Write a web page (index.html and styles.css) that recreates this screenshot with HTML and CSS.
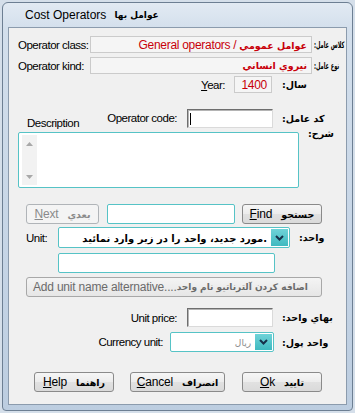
FILE: index.html
```html
<!DOCTYPE html>
<html lang="en">
<head>
    <meta charset="UTF-8">
    <meta name="viewport" content="width=device-width, initial-scale=1.0">
    <title>Cost Operators</title>
    <link rel="stylesheet" href="styles.css">
</head>
<body>
    <div class="window">
        <div class="titlebar"><span>Cost Operators</span> <b class="fa title-fa">عوامل بها</b></div>
        <div class="client">

            <div class="row r1">
                <span class="lbl cell-72">Operator class:</span>
                <div class="ro field-wide"><span>General operators / <b class="fa">عوامل عمومي</b></span></div>
                <span class="fa flbl narrow ml-2">كلاس عامل:</span>
            </div>

            <div class="row r2">
                <span class="lbl cell-72">Operator kind:</span>
                <div class="ro field-wide"><b class="fa">نيروي انساني</b></div>
                <span class="fa flbl narrow ml-2">نوع عامل:</span>
            </div>

            <div class="row r3">
                <span class="lbl cell-216 right"><u>Y</u>ear:</span>
                <div class="ro field-year"><span>1400</span></div>
                <span class="fa flbl ml-10">سال:</span>
            </div>

            <div class="row r4">
                <div class="code-left">
                    <span class="lbl desc">Description</span>
                    <span class="lbl">Operator code:</span>
                </div>
                <div class="sunken field-86 ml-10"><span class="caret"></span></div>
                <span class="fa flbl ml-9">كد عامل:</span>
            </div>

            <div class="row r-memo">
                <div class="memo">
                    <div class="memo-scroll">
                        <svg width="7" height="4" viewBox="0 0 7 4"><polygon points="0,4 3.5,0 7,4" fill="#a8a8a8"/></svg>
                        <svg width="7" height="4" viewBox="0 0 7 4"><polygon points="0,0 3.5,4 7,0" fill="#a8a8a8"/></svg>
                    </div>
                </div>
                <span class="fa flbl ml-9">شرح:</span>
            </div>

            <div class="row r5">
                <button class="btn disabled btn-next"><span><u>N</u>ext</span><b class="fa">بعدي</b></button>
                <div class="teal field-find"></div>
                <button class="btn btn-find"><span><u>F</u>ind</span><b class="fa">جستجو</b></button>
            </div>

            <div class="row r6">
                <span class="lbl unit-lbl">Unit:</span>
                <div class="teal combo combo-unit">
                    <span class="combo-text"><b class="fa">مورد جديد، واحد را در زير وارد نمائيد.</b></span>
                    <span class="drop">
                        <svg width="9" height="6" viewBox="0 0 9 6"><polyline points="1,1 4.5,4.5 8,1" fill="none" stroke="#16304a" stroke-width="2"/></svg>
                    </span>
                </div>
                <span class="fa flbl ml-9">واحد:</span>
            </div>

            <div class="row r7">
                <div class="teal field-unit2"></div>
            </div>

            <div class="row r8">
                <button class="btn soft btn-add">Add unit name alternative....<b class="fa">اضافه كردن آلترناتيو نام واحد</b></button>
            </div>

            <div class="row r9">
                <span class="lbl cell-168 right">Unit price:</span>
                <div class="sunken field-86 ml-10"></div>
                <span class="fa flbl ml-9">بهاي واحد:</span>
            </div>

            <div class="row r10">
                <span class="lbl cell-154 right">Currency unit:</span>
                <div class="teal combo combo-cur">
                    <span class="combo-text grey"><b class="fa">ريال</b></span>
                    <span class="drop">
                        <svg width="9" height="6" viewBox="0 0 9 6"><polyline points="1,1 4.5,4.5 8,1" fill="none" stroke="#16304a" stroke-width="2"/></svg>
                    </span>
                </div>
                <span class="fa flbl ml-8">واحد پول:</span>
            </div>

            <div class="row r11">
                <button class="btn btn-help"><span><u>H</u>elp</span><b class="fa">راهنما</b></button>
                <button class="btn btn-cancel"><span><u>C</u>ancel</span><b class="fa">انصراف</b></button>
                <button class="btn btn-ok"><span><u>O</u>k</span><b class="fa">تاييد</b></button>
            </div>

        </div>
    </div>
</body>
</html>
```

FILE: styles.css
```css
*{
    margin:0;
    padding:0;
    box-sizing:border-box;
}
body{
    padding:2px;
    background:#d5dfea;
    font-family:"Liberation Sans", "DejaVu Sans", sans-serif;
    font-size:12px;
    color:#000;
}
.window{
    height:409px;
    border:1px solid #6d7f93;
    border-radius:6px 6px 4px 4px;
    background:linear-gradient(to bottom, #e2eaf3 0, #d3dfec 26px, #c6d5e6 60%, #bccde0 100%);
    padding:0 5px 5px;
    display:flex;
    flex-direction:column;
    overflow:hidden;
}
.titlebar{
    height:24px;
    display:flex;
    align-items:center;
    gap:8px;
    padding-left:17px;
    font-size:12px;
}
.title-fa{
    font-size:11px;
}
.client{
    flex:1;
    border:1px solid #8b9bad;
    background:#f0f0f0;
    display:flex;
    flex-direction:column;
    overflow:hidden;
}

/* rows */
.row{
    display:flex;
    align-items:center;
}
.row > *{
    flex-shrink:0;
}
.r1{ margin-top:8px; height:17px; padding-left:9px; }
.r2{ margin-top:4px; height:17px; padding-left:9px; }
.r3{ margin-top:2px; height:17px; }
.r4{ margin-top:15px; height:20px; }
.r-memo{ height:60px; align-items:flex-start; }
.r5{ margin-top:16px; height:20px; }
.r6{ margin-top:3px; height:21px; }
.r7{ margin-top:5px; height:20px; }
.r8{ margin-top:4px; height:20px; }
.r9{ margin-top:11px; height:19px; }
.r10{ margin-top:5px; height:20px; }
.r11{ margin-top:20px; height:20px; }

/* text */
.lbl{
    font-size:11.5px;
    letter-spacing:-0.5px;
    white-space:nowrap;
}
.right{ text-align:right; }
.cell-72{ width:72px; }
.cell-154{ width:154px; }
.cell-168{ width:168px; }
.cell-216{ width:216px; }
.fa{
    font-family:"DejaVu Sans", sans-serif;
    font-weight:bold;
    font-size:9px;
    letter-spacing:0;
}
.flbl{
    display:inline-block;
    font-size:9.5px;
    direction:rtl;
    white-space:nowrap;
}
.narrow{
    font-size:9px;
    transform:scaleX(.56);
    transform-origin:left center;
}
.ml-2{ margin-left:2px; }
.ml-8{ margin-left:8px; }
.ml-9{ margin-left:9px; }
.ml-10{ margin-left:10px; }

/* read only fields */
.ro{
    height:17px;
    background:#f5f5f5;
    border:1px solid #cbcbcb;
    color:#c8000a;
    display:flex;
    align-items:center;
    justify-content:flex-end;
    padding-right:4px;
    white-space:nowrap;
    letter-spacing:-0.3px;
}
.ro .fa{ font-size:9.5px; }
.field-wide{ width:222px; }
.field-year{ width:38px; margin-left:9px; }

/* code row */
.code-left{
    width:168px;
    height:100%;
    padding-left:18px;
    display:flex;
    justify-content:space-between;
    align-items:center;
}
.desc{
    align-self:flex-end;
    margin-bottom:-1px;
}
.sunken{
    height:19px;
    background:#fff;
    border:1px solid;
    border-color:#6e6e6e #dadada #dadada #6e6e6e;
    box-shadow:inset 1px 1px 0 #b4b4b4;
    position:relative;
}
.field-86{ width:86px; }
.caret{
    position:absolute;
    left:2px;
    top:3px;
    width:1px;
    height:12px;
    background:#000;
}

/* memo */
.memo{
    margin-left:9px;
    margin-top:4px;
    width:281px;
    height:56px;
    background:#fff;
    border:1px solid #56c3c6;
    border-radius:2px;
    padding:2px 3px;
}
.memo-scroll{
    width:15px;
    height:100%;
    background:#f2f2f2;
    display:flex;
    flex-direction:column;
    justify-content:space-between;
    align-items:center;
    padding:7px 0 6px;
}

/* teal controls */
.teal{
    height:100%;
    background:#fff;
    border:1px solid #56c3c6;
    border-radius:2px;
}
.field-find{ width:128px; margin-left:8px; }
.field-unit2{ width:217px; margin-left:49px; }
.combo{
    display:flex;
    align-items:center;
    justify-content:flex-end;
    padding:1px;
}
.combo-text{
    flex:1;
    text-align:right;
    padding-right:4px;
    white-space:nowrap;
    overflow:hidden;
}
.combo-unit .fa{ font-size:10px; }
.grey{ color:#8a8a8a; }
.grey .fa{ font-weight:normal; }
.drop{
    width:17px;
    height:100%;
    background:linear-gradient(to bottom, #6fd3d8, #3fb9c0);
    display:flex;
    align-items:center;
    justify-content:center;
}
.unit-lbl{ margin-left:17px; width:32px; }
.combo-unit{ width:232px; }
.combo-cur{ width:104px; margin-left:7px; }

/* buttons */
.btn{
    height:20px;
    border:1px solid #8a8a8a;
    border-radius:3px;
    background:linear-gradient(to bottom, #f6f6f6 0, #ececec 50%, #e1e1e1 51%, #dadada 100%);
    font-family:"Liberation Sans", "DejaVu Sans", sans-serif;
    font-size:12px;
    letter-spacing:-0.2px;
    color:#000;
    display:flex;
    align-items:center;
    justify-content:center;
    gap:9px;
    white-space:nowrap;
}
.btn .fa{ font-size:9.5px; }
.disabled{
    border-color:#b0b4b8;
    background:#f4f4f4;
    color:#8a8a8a;
}
.soft{
    border-color:#a8a8a8;
    background:linear-gradient(to bottom, #f4f4f4, #e6e6e6);
    color:#6b6b6b;
    justify-content:flex-start;
    padding-left:6px;
    gap:0;
}
.soft .fa{ font-size:9px; }
.btn-next{ width:73px; margin-left:17px; }
.btn-find{ width:80px; margin-left:7px; }
.btn-add{ width:296px; margin-left:17px; }
.btn-help{ width:80px; margin-left:25px; }
.btn-cancel{ width:95px; margin-left:16px; }
.btn-ok{ width:80px; margin-left:17px; }
```
